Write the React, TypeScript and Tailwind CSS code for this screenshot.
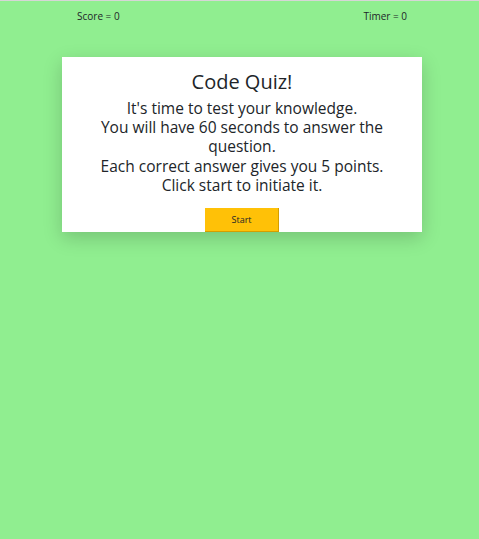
import React from "react";

const App = () => {
  return (
    <div className="min-h-[539px] border-t border-[#d6d6d6] bg-[#90ee90] font-['Open_Sans',sans-serif] text-[#212529]">
      <div className="ml-[62px] flex w-[360px] justify-between px-[15px] pt-[8px] text-[10px] leading-[14px]">
        <span>Score = 0</span>
        <span>Timer = 0</span>
      </div>
      <div className="ml-[62px] mt-[34px] flex w-[360px] flex-col items-center bg-white pt-[12px] text-center shadow-[0_6px_18px_rgba(0,0,0,0.18)]">
        <h1 className="text-[20px] leading-[26px]">Code Quiz!</h1>
        <p className="mt-[4px] px-2 text-[15.5px] font-medium leading-[19.2px]">
          It's time to test your knowledge.
          <br />
          You will have 60 seconds to answer the question.
          <br />
          Each correct answer gives you 5 points.
          <br />
          Click start to initiate it.
        </p>
        <button className="mt-[13px] h-[24px] w-[74px] border-b border-r border-[#d39e00] bg-[#ffc107] text-[9px]">
          Start
        </button>
      </div>
    </div>
  );
};

export default App;
